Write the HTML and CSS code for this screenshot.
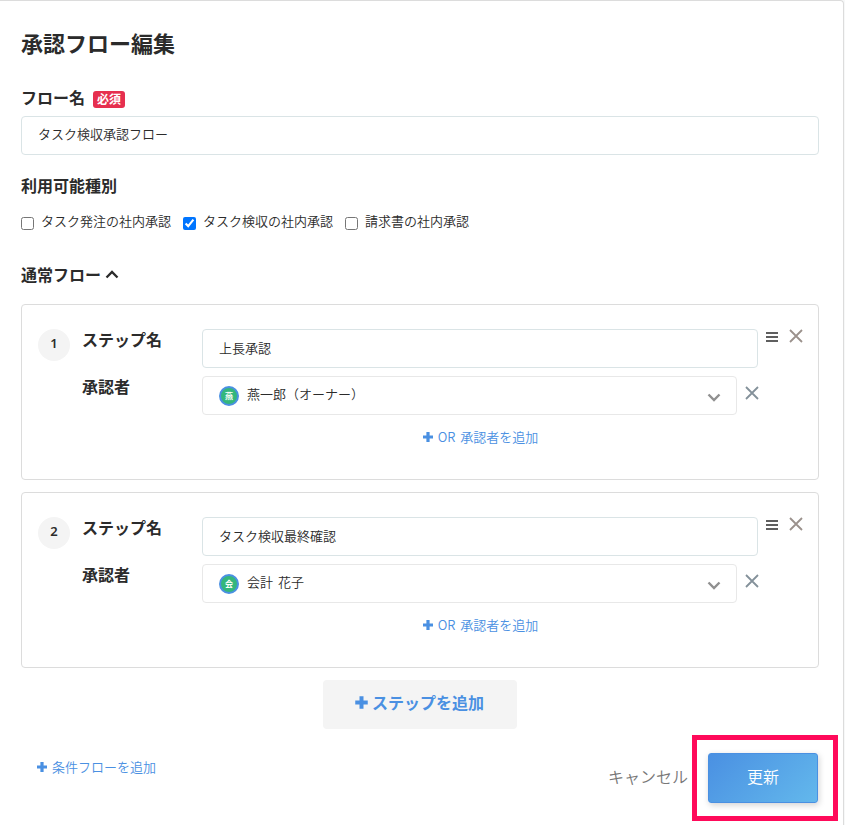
FILE: index.html
```html
<!DOCTYPE html>
<html lang="ja">
<head>
<meta charset="utf-8">
<title>承認フロー編集</title>
<link rel="stylesheet" href="styles.css">
</head>
<body>
<svg class="defs" aria-hidden="true">
  <symbol id="plus" viewBox="0 0 12 12"><path d="M4.4 1h3.2v3.4H11v3.2H7.6V11H4.4V7.6H1V4.4h3.4z"/></symbol>
  <symbol id="close" viewBox="0 0 14 14"><path d="M1 1l12 12M13 1L1 13"/></symbol>
  <symbol id="down" viewBox="0 0 14 9"><path d="M1.5 1.5L7 7l5.500-5.500"/></symbol>
  <symbol id="menu" viewBox="0 0 12 10"><path d="M0 1h12M0 5h12M0 9h12"/></symbol>
</svg>
<main class="panel">
  <h1 class="title">承認フロー編集</h1>
  <div class="label name-label">フロー名<span class="badge">必須</span></div>
  <div class="field flow-name">タスク検収承認フロー</div>
  <div class="label kinds-label">利用可能種別</div>
  <div class="checks">
    <label class="check"><input type="checkbox"><span>タスク発注の社内承認</span></label>
    <label class="check"><input type="checkbox" checked><span>タスク検収の社内承認</span></label>
    <label class="check"><input type="checkbox"><span>請求書の社内承認</span></label>
  </div>
  <div class="label normal-label">通常フロー<svg class="up" viewBox="0 0 14 9"><path d="M1.500 7.500L7 2l5.500 5.500"/></svg></div>

  <section class="step">
    <div class="number">1</div>
    <div class="names"><div class="label">ステップ名</div><div class="label">承認者</div></div>
    <div class="controls">
      <div class="row">
        <div class="field step-name">上長承認</div>
        <svg class="menu"><use href="#menu"/></svg>
        <svg class="close warm"><use href="#close"/></svg>
      </div>
      <div class="row">
        <div class="field select"><span class="avatar">燕</span><span class="person">燕一郎（オーナー）</span><svg class="down"><use href="#down"/></svg></div>
        <svg class="close cool"><use href="#close"/></svg>
      </div>
      <a class="add or"><svg><use href="#plus"/></svg>OR 承認者を追加</a>
    </div>
  </section>

  <section class="step">
    <div class="number">2</div>
    <div class="names"><div class="label">ステップ名</div><div class="label">承認者</div></div>
    <div class="controls">
      <div class="row">
        <div class="field step-name">タスク検収最終確認</div>
        <svg class="menu"><use href="#menu"/></svg>
        <svg class="close warm"><use href="#close"/></svg>
      </div>
      <div class="row">
        <div class="field select"><span class="avatar">会</span><span class="person">会計 花子</span><svg class="down"><use href="#down"/></svg></div>
        <svg class="close cool"><use href="#close"/></svg>
      </div>
      <a class="add or"><svg><use href="#plus"/></svg>OR 承認者を追加</a>
    </div>
  </section>

  <button class="add-step"><svg><use href="#plus"/></svg>ステップを追加</button>

  <footer class="footer">
    <a class="add condition"><svg><use href="#plus"/></svg>条件フローを追加</a>
    <a class="cancel">キャンセル</a>
    <div class="submit-wrap"><button class="submit">更新</button><div class="highlight"></div></div>
  </footer>
</main>
</body>
</html>
```
FILE: styles.css
```css
* { box-sizing: border-box; }
html, body { height: 100%; }
body {
  margin: 0;
  overflow: hidden;
  background: #f7f8f8;
  color: #2b2b2b;
  font: 350 13px/20px "Noto Sans CJK JP", sans-serif;
}
svg { display: block; flex: none; fill: none; }
.defs { position: absolute; width: 0; height: 0; }
button { font-family: inherit; font-weight: inherit; padding: 0; }
.panel {
  width: 844px;
  height: 840px;
  padding: 25px 24px 0 21px;
  background: #fff;
  border-top: 1px solid #dcdcdc;
  border-right: 1px solid #dcdcdc;
  border-top-right-radius: 4px;
}
.title { margin: 0; font-size: 22px; line-height: 32px; font-weight: 700; }
.label { display: flex; align-items: center; height: 24px; font-size: 16px; line-height: 24px; font-weight: 700; }
.name-label { margin-top: 27px; }
.badge {
  width: 32px;
  height: 17px;
  margin: 4px 0 0 8px;
  border-radius: 3px;
  background: #e62f4f;
  color: #fff;
  font-size: 12px;
  line-height: 15px;
  text-align: center;
}
.field {
  height: 39px;
  padding: 0 16px 3px;
  border: 1px solid #dae4e6;
  border-radius: 4px;
  background: #fff;
  line-height: 34px;
}
.flow-name { margin-top: 7px; }
.kinds-label { margin-top: 18px; }
.checks { display: flex; gap: 12px; height: 20px; margin-top: 13px; }
.check { display: flex; }
.check input { width: 13px; height: 13px; margin: 7px 7px 0 0; accent-color: #0075ff; }
.check span { line-height: 22px; }
.normal-label { margin-top: 32px; }
.up { width: 14px; height: 9px; margin: 1px 0 0 4px; stroke: #2b2b2b; stroke-width: 2.300; }
.step {
  display: flex;
  height: 176px;
  margin-top: 12px;
  padding: 24px 15px 0 16px;
  border: 1px solid #dcdcdc;
  border-radius: 4px;
}
.normal-label + .step { margin-top: 18px; }
.number {
  width: 32px;
  height: 32px;
  border-radius: 50%;
  background: #f4f4f4;
  font-family: "Noto Sans", "Noto Sans CJK JP", sans-serif;
  font-size: 13px;
  line-height: 29px;
  font-weight: 600;
  text-align: center;
}
.names { width: 120px; margin-left: 12px; margin-top: -2px; }
.names .label + .label { margin-top: 23px; }
.controls { width: 601px; }
.row { display: flex; align-items: flex-start; }
.row + .row { margin-top: 8px; }
.step-name { width: 556px; line-height: 36px; }
.menu { width: 12px; height: 10px; margin: 3px 0 0 8px; stroke: #2b2b2b; stroke-width: 1.700; }
.close { width: 14px; height: 14px; stroke-width: 1.800; }
.warm { margin: 0 0 0 11px; stroke: #9b918c; }
.cool { margin: 10px 0 0 8px; stroke: #84919a; }
.select { display: flex; width: 535px; border-color: #e8e8e8; }
.person { word-spacing: 2px; }
.avatar {
  width: 20px;
  height: 20px;
  margin: 9px 8px 0 0;
  border: 2px solid #4a90e2;
  border-radius: 50%;
  background: #34b77c;
  color: #fff;
  font-size: 8px;
  line-height: 15px;
  font-weight: 700;
  text-align: center;
}
.down { width: 14px; height: 9px; margin: 16px -1px 0 auto; stroke: #909090; stroke-width: 2.400; }
.add { display: flex; align-items: center; height: 20px; color: #4a90e2; }
.add svg { width: 12px; height: 12px; margin-right: 4px; fill: #4a90e2; }
.or { width: 556px; justify-content: center; margin-top: 12px; word-spacing: 2px; }
.add-step {
  display: flex;
  align-items: center;
  justify-content: center;
  width: 194px;
  height: 49px;
  margin: 12px auto 0 302px;
  padding: 0 2px 5px 0;
  border: 0;
  border-radius: 4px;
  background: #f4f4f4;
  color: #4a90e2;
  font-size: 16px;
  font-weight: 700;
}
.add-step svg { width: 15px; height: 15px; margin-right: 3px; fill: #4a90e2; }
.footer { display: flex; height: 50px; margin: 24px 1px 0 15px; }
.condition { margin-top: 4px; margin-right: auto; }
.cancel { margin: 11px 20px 0 0; color: #777; font-size: 16px; line-height: 24px; }
.submit-wrap { position: relative; width: 110px; height: 50px; }
.submit {
  display: block;
  width: 110px;
  height: 50px;
  padding-bottom: 4px;
  border: 1px solid #4a90e2;
  border-radius: 3px;
  background: linear-gradient(135deg, #4a90e2, #63b8ec);
  box-shadow: 1px 2px 6px rgba(0, 0, 0, .18);
  color: #fff;
  font-size: 16px;
}
.highlight { position: absolute; inset: -18px -20px -18px -16px; border: 5px solid #ff0a5a; }
```
